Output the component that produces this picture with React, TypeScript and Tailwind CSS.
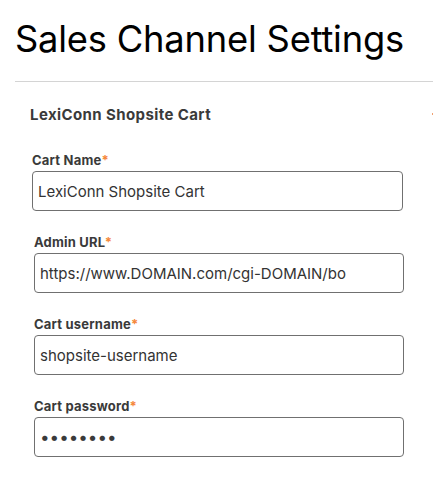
import React from 'react';

const fields = [
  { label: 'Cart Name', value: 'LexiConn Shopsite Cart', type: 'text', offset: 'ml-[32px] w-[371px]' },
  { label: 'Admin URL', value: 'https://www.DOMAIN.com/cgi-DOMAIN/bo', type: 'text', offset: 'ml-[34px] w-[370px]' },
  { label: 'Cart username', value: 'shopsite-username', type: 'text', offset: 'ml-[34px] w-[370px]' },
  { label: 'Cart password', value: 'password', type: 'password', offset: 'ml-[34px] w-[370px]' },
];

const App: React.FC = () => {
  return (
    <div className="w-[433px] h-[481px] bg-white overflow-hidden font-['Inter',sans-serif]">
      <h1 className="pl-[15px] pt-[17px] text-[36.3px] leading-[44px] text-black tracking-[-0.2px]">
        Sales Channel Settings
      </h1>
      <div className="ml-[15px] mt-[20px] border-t border-[#d4d4d4]" />
      <div className="relative">
        <h2 className="pl-[30px] pt-[24px] text-[15px] leading-[18px] font-bold text-[#3a3a3a] tracking-[0.4px]">
          LexiConn Shopsite Cart
        </h2>
        <span className="absolute right-0 top-[31px] w-[1px] h-[2px] bg-[#f0a070]" />
      </div>
      <div className="mt-[28px] flex flex-col gap-[23px]">
        {fields.map((f) => (
          <div key={f.label} className={f.offset}>
            <label className="block text-[13px] leading-[16px] font-bold text-[#3a3a3a] tracking-[0.2px]">
              {f.label}
              <span className="text-[#f5873a]">*</span>
            </label>
            <input
              type={f.type}
              defaultValue={f.value}
              readOnly
              className={
                f.type === 'password'
                  ? 'mt-[3px] block w-full h-[40px] px-[5px] border border-[#707070] rounded-[4px] text-[17px] text-[#3a3a3a] outline-none'
                  : 'mt-[3px] block w-full h-[40px] px-[5px] border border-[#707070] rounded-[4px] text-[15px] text-[#333] outline-none'
              }
            />
          </div>
        ))}
      </div>
    </div>
  );
};

export default App;
